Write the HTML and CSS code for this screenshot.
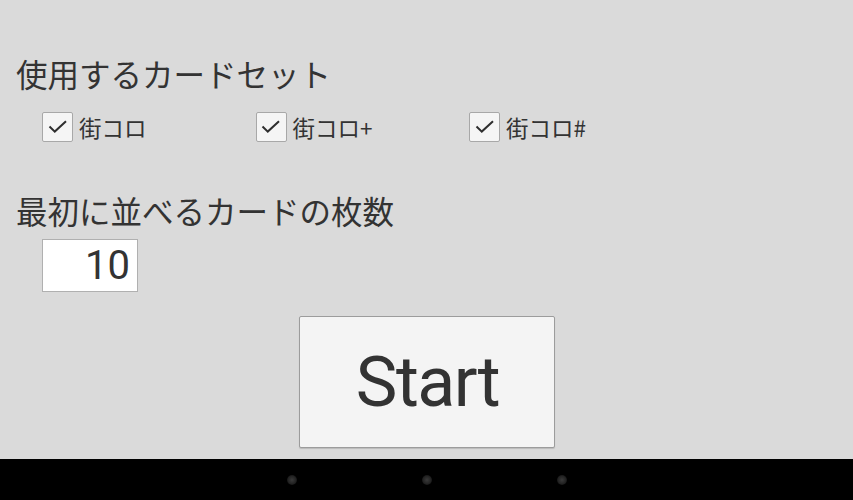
FILE: index.html
```html
<!DOCTYPE html>
<html lang="ja">
<head>
<meta charset="utf-8">
<title>街コロ</title>
<link rel="stylesheet" href="styles.css">
</head>
<body>
<div class="screen">
  <main class="content">
    <h1 class="heading">使用するカードセット</h1>
    <div class="sets">
      <label class="set"><span class="box"><svg viewBox="0 0 20 20" width="20" height="20"><path d="M1.5 9.5 L6.8 14.6 L18 4.2" fill="none" stroke="#2e2e2e" stroke-width="2"/></svg></span><span class="set-label">街コロ</span></label>
      <label class="set"><span class="box"><svg viewBox="0 0 20 20" width="20" height="20"><path d="M1.5 9.5 L6.8 14.6 L18 4.2" fill="none" stroke="#2e2e2e" stroke-width="2"/></svg></span><span class="set-label">街コロ+</span></label>
      <label class="set"><span class="box"><svg viewBox="0 0 20 20" width="20" height="20"><path d="M1.5 9.5 L6.8 14.6 L18 4.2" fill="none" stroke="#2e2e2e" stroke-width="2"/></svg></span><span class="set-label">街コロ#</span></label>
    </div>
    <h2 class="heading heading-2">最初に並べるカードの枚数</h2>
    <div class="count-row">
      <div class="count">10</div>
    </div>
    <div class="start-row">
      <button class="start">Start</button>
    </div>
  </main>
  <nav class="navbar">
    <span class="dot"></span>
    <span class="dot"></span>
    <span class="dot"></span>
  </nav>
</div>
</body>
</html>
```

FILE: styles.css
```css
html, body {
  margin: 0;
  padding: 0;
}
body {
  background: #dadada;
  font-family: Roboto, "Noto Sans CJK JP", sans-serif;
  color: #333;
}
.screen {
  width: 853px;
  height: 500px;
  display: flex;
  flex-direction: column;
  overflow: hidden;
}
.content {
  flex: 1;
  padding: 57px 0 0 16px;
  box-sizing: border-box;
}
.heading {
  margin: 0;
  font-family: "Noto Sans CJK JP", sans-serif;
  font-weight: 400;
  font-size: 31.5px;
  line-height: 32px;
  color: #333;
}
.sets {
  display: grid;
  grid-template-columns: 213.5px 213.5px 213.5px;
  margin: 22px 0 0 26px;
}
.set {
  display: flex;
  align-items: center;
  gap: 6px;
}
.box {
  width: 29px;
  height: 28px;
  border: 1px solid #a8a8a8;
  border-radius: 2px;
  background: #f5f5f5;
  display: flex;
  align-items: center;
  justify-content: center;
}
.set-label {
  font-family: "Noto Sans CJK JP", sans-serif;
  font-size: 22.5px;
  color: #333;
}
.heading-2 {
  margin-top: 51px;
}
.count-row {
  margin: 13px 0 0 26px;
}
.count {
  width: 87px;
  height: 51px;
  padding-right: 7px;
  border: 1px solid #b0b0b0;
  background: #fff;
  font-family: Roboto, sans-serif;
  font-size: 40px;
  line-height: 52px;
  text-align: right;
}
.start-row {
  display: flex;
  justify-content: center;
  margin: 24px 0 0 -16px;
}
.start {
  width: 256px;
  height: 132px;
  border: 1px solid #9c9c9c;
  border-radius: 2px;
  background: #f4f4f4;
  box-shadow: 0 1px 1px rgba(0,0,0,0.15);
  font-family: Roboto, sans-serif;
  font-size: 70px;
  letter-spacing: -1.5px;
  color: #333;
  padding: 0 0 0 2px;
}
.navbar {
  height: 41px;
  background: #000;
  display: flex;
  justify-content: center;
  align-items: center;
  gap: 125px;
}
.dot {
  width: 10px;
  height: 10px;
  border-radius: 50%;
  background: radial-gradient(circle, #3a3a3a 0%, #222 55%, #000 100%);
}
```
